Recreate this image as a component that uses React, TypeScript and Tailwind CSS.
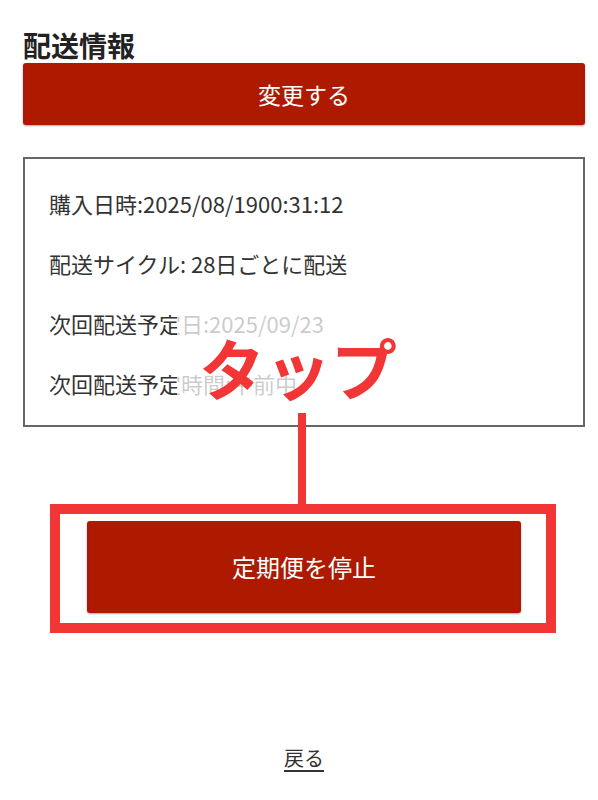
import React from 'react';

const rows = [
  '購入日時:2025/08/1900:31:12',
  '配送サイクル: 28日ごとに配送',
  '次回配送予定日:2025/09/23',
  '次回配送予定時間:午前中',
];

// annotation red used for the "tap" callout
const callout = 'bg-[#f23535]';

export default function App() {
  return (
    <div
      className="relative w-[598px] h-[800px] bg-white overflow-hidden text-[#333]"
      style={{ fontFamily: '"Noto Sans CJK JP", "Noto Sans", sans-serif' }}
    >
      <div className="pl-[23px] pr-[13px] pt-[27px] flex flex-col">
        <h2 className="text-[28px] leading-[36px] font-bold text-[#222]">配送情報</h2>

        <button className="w-full h-[62px] bg-[#ad1a00] rounded-[3px] shadow-[0_1px_2px_rgba(0,0,0,0.35)] text-white text-[23px]">
          変更する
        </button>

        {/* Delivery details */}
        <div className="mt-[32px] h-[270px] border-2 border-[#666] pl-[24px] pt-[29px] flex flex-col gap-[30px]">
          {rows.map((r) => (
            <p key={r} className="text-[22px] leading-[30px]">
              {r}
            </p>
          ))}
        </div>

        <button className="self-center mt-[94px] w-[434px] h-[92px] bg-[#ad1a00] rounded-[3px] shadow-[0_1px_2px_rgba(0,0,0,0.35)] text-white text-[24px]">
          定期便を停止
        </button>

        <div className="mt-[130px] flex justify-center">
          <a href="#" className="text-[20px] leading-[30px] underline underline-offset-[4px] text-[#333]">
            戻る
          </a>
        </div>
      </div>

      {/* Annotation overlay */}
      <div className="absolute left-[177px] top-[304px] w-[248px] h-[120px] bg-white/75" />
      <div className="absolute left-[199px] top-[321px] text-[66px] leading-[90px] font-bold text-[#f23535] whitespace-nowrap">
        タップ
      </div>
      <div className={`absolute left-[298px] top-[413px] w-[8px] h-[92px] ${callout}`} />
      <div className="absolute left-[50px] top-[504px] w-[506px] h-[129px] border-[10px] border-[#f23535]" />
    </div>
  );
}
